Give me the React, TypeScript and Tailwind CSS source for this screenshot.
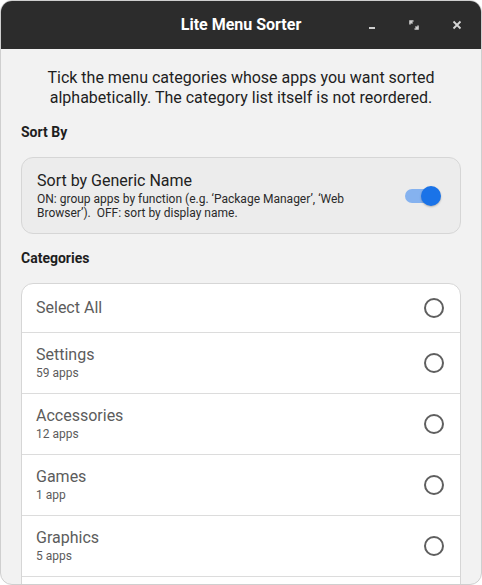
import React from "react";

const rows = [
  { name: "Settings", sub: "59 apps" },
  { name: "Accessories", sub: "12 apps" },
  { name: "Games", sub: "1 app" },
  { name: "Graphics", sub: "5 apps" },
];

function Radio() {
  return <div className="w-[20px] h-[20px] rounded-full border-2 border-[#5f5f5f] shrink-0" />;
}

export default function App() {
  return (
    <div className="w-[482px] h-[585px] bg-white overflow-hidden" style={{ fontFamily: "Roboto, 'Liberation Sans', sans-serif" }}>
      <div className="w-[482px] h-[585px] rounded-[12px] border border-[#cfcfcf] overflow-hidden flex flex-col bg-[#f2f2f2]">
        <div className="h-[48px] shrink-0 bg-[#2c2c2c] flex items-center relative">
          <div className="absolute inset-0 flex items-center justify-center text-white font-bold text-[16px]">Lite Menu Sorter</div>
          <div className="ml-auto flex items-center relative">
            <div className="w-[42px] h-[48px] flex items-center justify-center">
              <div className="w-[6px] h-[2px] bg-[#cfcfcf] mt-[6px]" />
            </div>
            <div className="w-[42px] h-[48px] flex items-center justify-center">
              <svg width="10" height="10" viewBox="0 0 10 10">
                <path d="M1 4.5V1h3.5M1 1l2.5 2.5M9 5.5V9H5.5M9 9L6.5 6.5" stroke="#cfcfcf" strokeWidth="1.6" fill="none" />
              </svg>
            </div>
            <div className="w-[44px] h-[48px] flex items-center justify-center mr-[2px]">
              <svg width="10" height="10" viewBox="0 0 10 10">
                <path d="M1.5 1.5L8.5 8.5M8.5 1.5L1.5 8.5" stroke="#d6d6d6" strokeWidth="1.8" />
              </svg>
            </div>
          </div>
        </div>
        <div className="flex-1 px-[20px] pt-[19px] flex flex-col">
          <p className="text-center text-[16px] leading-[20px] text-[#1e1e1e] px-[6px]">
            Tick the menu categories whose apps you want sorted alphabetically. The category list itself is not reordered.
          </p>
          <div className="mt-[14px] font-bold text-[14px] leading-[20px] text-[#1e1e1e]">Sort By</div>
          <div className="mt-[15px] rounded-[12px] border border-[#d6d6d6] bg-[#ececec] h-[77px] flex items-center pl-[15px] pr-[19px]">
            <div className="flex-1">
              <div className="text-[16px] leading-[19px] text-[#222]">Sort by Generic Name</div>
              <div className="text-[12px] leading-[14px] text-[#2a2a2a] mt-[2px] w-[330px]">
                ON: group apps by function (e.g. ‘Package Manager’, ‘Web Browser’).&nbsp; OFF: sort by display name.
              </div>
            </div>
            <div className="relative w-[36px] h-[20px] flex items-center">
              <div className="w-[32px] h-[14px] rounded-full bg-[#85b2ef]" />
              <div className="absolute right-0 top-0 w-[20px] h-[20px] rounded-full bg-[#1a73e8] shadow-[0_1px_2px_rgba(0,0,0,0.25)]" />
            </div>
          </div>
          <div className="mt-[14px] font-bold text-[14px] leading-[20px] text-[#1e1e1e]">Categories</div>
          <div className="mt-[15px] rounded-t-[12px] border border-[#d6d6d6] bg-white flex flex-col">
            <div className="h-[48px] flex items-center pl-[14px] pr-[16px]">
              <div className="flex-1 text-[16px] text-[#5c5c5c]">Select All</div>
              <Radio />
            </div>
            {rows.map((r) => (
              <div key={r.name} className="h-[61px] border-t border-[#dcdcdc] flex items-center pl-[14px] pr-[16px]">
                <div className="flex-1">
                  <div className="text-[16px] leading-[19px] text-[#5c5c5c]">{r.name}</div>
                  <div className="text-[12px] leading-[16px] text-[#5c5c5c] mt-[1px]">{r.sub}</div>
                </div>
                <Radio />
              </div>
            ))}
            <div className="h-[61px] border-t border-[#dcdcdc]" />
          </div>
        </div>
      </div>
    </div>
  );
}
